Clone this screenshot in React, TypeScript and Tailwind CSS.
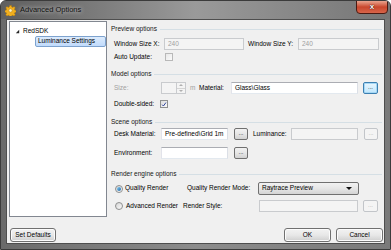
import type { ReactNode } from "react";

const ui =
  "font-['Liberation_Sans',Arial,sans-serif] text-[6.5px] leading-none whitespace-nowrap";

function GroupHeader({ label }: { label: string }) {
  return (
    <div className="flex h-[12px] items-center">
      <span className="text-[#151515]">{label}</span>
      <div className="ml-[3px] h-px flex-1 bg-[#d5dfe5]" />
    </div>
  );
}

function Field({
  className = "",
  disabled = false,
  children,
}: {
  className?: string;
  disabled?: boolean;
  children?: ReactNode;
}) {
  return (
    <div
      className={`flex h-[12px] items-center overflow-hidden border px-[3px] ${
        disabled
          ? "border-[#c9cbce] bg-[#f4f4f4] text-[#a0a0a0]"
          : "border-[#abadb3] border-r-[#dbdfe6] border-b-[#e3e9ef] border-l-[#e2e3ea] bg-white text-black"
      } ${className}`}
    >
      {children}
    </div>
  );
}

function Dots({
  className = "",
  state = "normal",
}: {
  className?: string;
  state?: "normal" | "focus" | "disabled";
}) {
  const look =
    state === "focus"
      ? "border-[#3c7fb1] bg-gradient-to-b from-[#eaf6fd] to-[#bee6fd] text-black shadow-[inset_0_0_0_1px_#a6d8f5]"
      : state === "disabled"
        ? "border-[#c2c5c9] bg-[#f4f4f4] text-[#a8a8a8]"
        : "border-[#707070] bg-gradient-to-b from-[#f2f2f2] via-[#e6e6e6] to-[#d2d2d2] text-black";
  return (
    <div
      className={`flex h-[12px] items-end justify-center rounded-[2px] border pb-[3px] text-[6px] ${look} ${className}`}
    >
      ...
    </div>
  );
}

function Check({ checked = false, className = "" }: { checked?: boolean; className?: string }) {
  return (
    <div
      className={`flex h-[8px] w-[8px] items-center justify-center border border-[#8e8f8f] bg-gradient-to-br from-[#dcdcdc] to-[#fafafa] ${className}`}
    >
      {checked && (
        <svg viewBox="0 0 8 8" className="h-[7px] w-[7px]">
          <path d="M1.5 4.2 L3.2 6 L6.6 1.4" fill="none" stroke="#2a3f9a" strokeWidth="1.3" />
        </svg>
      )}
    </div>
  );
}

function Radio({ checked = false }: { checked?: boolean }) {
  return (
    <div className="flex h-[8px] w-[8px] items-center justify-center rounded-full border border-[#8e8f8f] bg-gradient-to-br from-[#d4d4d4] to-[#fbfbfb]">
      {checked && (
        <div className="h-[4px] w-[4px] rounded-full bg-gradient-to-br from-[#8ad0f4] to-[#1a66a8]" />
      )}
    </div>
  );
}

function PushButton({ label, className = "" }: { label: string; className?: string }) {
  return (
    <div
      className={`flex h-[14px] items-center justify-center rounded-[3px] border border-[#707070] bg-gradient-to-b from-[#f2f2f2] via-[#e8e8e8] to-[#cfcfcf] text-black shadow-[inset_0_0_0_1px_#fcfcfc] ${className}`}
    >
      {label}
    </div>
  );
}

function Gear() {
  return (
    <svg viewBox="0 0 12 12" className="h-[11px] w-[11px]">
      <g fill="#f2b01e" stroke="#b0760a" strokeWidth="0.5">
        <path d="M5 0.5h2l0.3 1.6 1.2 0.5 1.3-0.9 1.4 1.4-0.9 1.3 0.5 1.2 1.6 0.3v2l-1.6 0.3-0.5 1.2 0.9 1.3-1.4 1.4-1.3-0.9-1.2 0.5-0.3 1.6h-2l-0.3-1.6-1.2-0.5-1.3 0.9-1.4-1.4 0.9-1.3-0.5-1.2-1.600-0.3v-2l1.6-0.3 0.5-1.2-0.9-1.3 1.4-1.4 1.3 0.9 1.2-0.5z" />
      </g>
      <circle cx="6" cy="6" r="1.8" fill="#fff3c4" stroke="#b0760a" strokeWidth="0.5" />
    </svg>
  );
}

export default function App() {
  return (
    <div
      className={`${ui} flex h-[250px] w-[391px] flex-col overflow-hidden rounded-t-[6px] border border-[#3b3b3b] bg-gradient-to-r from-[#6a6a6a] via-[#8c8c8c] to-[#7a7a7a]`}
    >
      {/* title bar */}
      <div className="relative flex h-[18px] shrink-0 items-center bg-gradient-to-r from-[#5f5f5f] via-[#9a9a9a] to-[#767676] pl-[4px]">
        <Gear />
        <span className="ml-[4px] text-[7.5px] text-[#111] [text-shadow:0_0_4px_#e8e8e8]">
          Advanced Options
        </span>
        <div className="absolute right-[2px] top-[-1px] flex h-[14px] w-[32px] items-center justify-center rounded-b-[4px] border border-[#4a1a12] bg-gradient-to-b from-[#e9a48f] via-[#c9462c] to-[#d8654a]">
          <span className="text-[8px] font-bold text-white [text-shadow:0_0_1px_#3a0a00,0_0_1px_#3a0a00]">
            x
          </span>
        </div>
      </div>

      {/* client area */}
      <div className="mx-[5px] flex h-[225px] flex-col border border-[#4e4e4e] bg-[#f0f0f0]">
        <div className="flex pt-[1px]">
          {/* tree */}
          <div className="ml-[2px] h-[196px] w-[98px] border border-[#828790] bg-white pt-[4px]">
            <div className="flex h-[10px] items-center pl-[5px]">
              <svg viewBox="0 0 6 6" className="h-[5px] w-[5px]">
                <path d="M5 1 L5 5 L1 5 Z" fill="#262626" />
              </svg>
              <span className="ml-[3px]">RedSDK</span>
            </div>
            <div className="ml-[25px] flex h-[11px] w-[71px] items-center rounded-[2px] border border-[#7da2ce] bg-gradient-to-b from-[#dcebfc] to-[#c1dbfc] pl-[2px]">
              Luminance Settings
            </div>
          </div>

          {/* options */}
          <div className="ml-[4px] w-[271px]">
            <div className="mt-[2px]">
              <GroupHeader label="Preview options" />
            </div>

            <div className="mt-[3px] flex h-[12px] items-center">
              <span className="w-[53px] pl-[3px]">Window Size X:</span>
              <Field disabled className="w-[80px]">240</Field>
              <span className="ml-[4px] w-[50px]">Window Size Y:</span>
              <Field disabled className="w-[81px]">240</Field>
            </div>

            <div className="mt-[1px] flex h-[12px] items-center">
              <span className="w-[54px] pl-[3px]">Auto Update:</span>
              <Check className="border-[#b8b8b8] from-[#e8e8e8] to-[#f6f6f6]" />
            </div>

            <div className="mt-[5px]">
              <GroupHeader label="Model options" />
            </div>

            <div className="mt-[2px] flex h-[12px] items-center">
              <span className="w-[50px] pl-[3px] text-[#a0a0a0]">Size:</span>
              <Field disabled className="w-[16px]" />
              <div className="flex h-[12px] w-[9px] flex-col border border-l-0 border-[#c9cbce] bg-[#f4f4f4]">
                <div className="flex flex-1 items-center justify-center border-b border-[#d4d4d4]">
                  <svg viewBox="0 0 4 2" className="h-[2px] w-[4px]">
                    <path d="M0 2 L2 0 L4 2 Z" fill="#b0b0b0" />
                  </svg>
                </div>
                <div className="flex flex-1 items-center justify-center">
                  <svg viewBox="0 0 4 2" className="h-[2px] w-[4px]">
                    <path d="M0 0 L2 2 L4 0 Z" fill="#b0b0b0" />
                  </svg>
                </div>
              </div>
              <span className="ml-[4px] w-[9px] text-[#a0a0a0]">m</span>
              <span className="w-[32px]">Material:</span>
              <Field className="w-[127px]">Glass\Glass</Field>
              <Dots state="focus" className="ml-[5px] w-[15px]" />
            </div>

            <div className="mt-[4px] flex h-[12px] items-center">
              <span className="w-[49px] pl-[3px]">Double-sided:</span>
              <Check checked />
            </div>

            <div className="mt-[6px]">
              <GroupHeader label="Scene options" />
            </div>

            <div className="flex h-[12px] items-center">
              <span className="w-[50px] pl-[3px]">Desk Material:</span>
              <Field className="w-[67px]">Pre-defined\Grid 1m</Field>
              <Dots className="ml-[6px] w-[14px]" />
              <span className="ml-[5px] w-[38px]">Luminance:</span>
              <Field disabled className="w-[67px]" />
              <Dots state="disabled" className="ml-[6px] w-[14px]" />
            </div>

            <div className="mt-[7px] flex h-[12px] items-center">
              <span className="w-[50px] pl-[3px]">Environment:</span>
              <Field className="w-[67px]" />
              <Dots className="ml-[6px] w-[14px]" />
            </div>

            <div className="mt-[9px]">
              <GroupHeader label="Render engine options" />
            </div>

            <div className="mt-[2px] flex h-[13px] items-center">
              <div className="ml-[4px]">
                <Radio checked />
              </div>
              <span className="ml-[2px] w-[62px]">Quality Render</span>
              <span className="w-[71px]">Quality Render Mode:</span>
              <div className="flex h-[13px] w-[101px] items-center justify-between rounded-[2px] border border-[#707070] bg-gradient-to-b from-[#f2f2f2] via-[#e6e6e6] to-[#d4d4d4] pl-[3px] pr-[6px]">
                <span>Raytrace Preview</span>
                <svg viewBox="0 0 6 3" className="h-[3px] w-[6px]">
                  <path d="M0 0 L6 0 L3 3 Z" fill="#111" />
                </svg>
              </div>
            </div>

            <div className="mt-[5px] flex h-[12px] items-center">
              <div className="ml-[4px]">
                <Radio />
              </div>
              <span className="ml-[3px] w-[57px]">Advanced Render</span>
              <span className="w-[76px]">Render Style:</span>
              <Field disabled className="w-[99px]" />
              <Dots state="disabled" className="ml-[5px] w-[15px]" />
            </div>
          </div>
        </div>

        <div className="mt-[11px] flex items-center pl-[3px] pr-[1px]">
          <PushButton label="Set Defaults" className="w-[46px]" />
          <div className="flex-1" />
          <PushButton label="OK" className="w-[47px]" />
          <PushButton label="Cancel" className="ml-[5px] w-[47px]" />
        </div>
      </div>
    </div>
  );
}
